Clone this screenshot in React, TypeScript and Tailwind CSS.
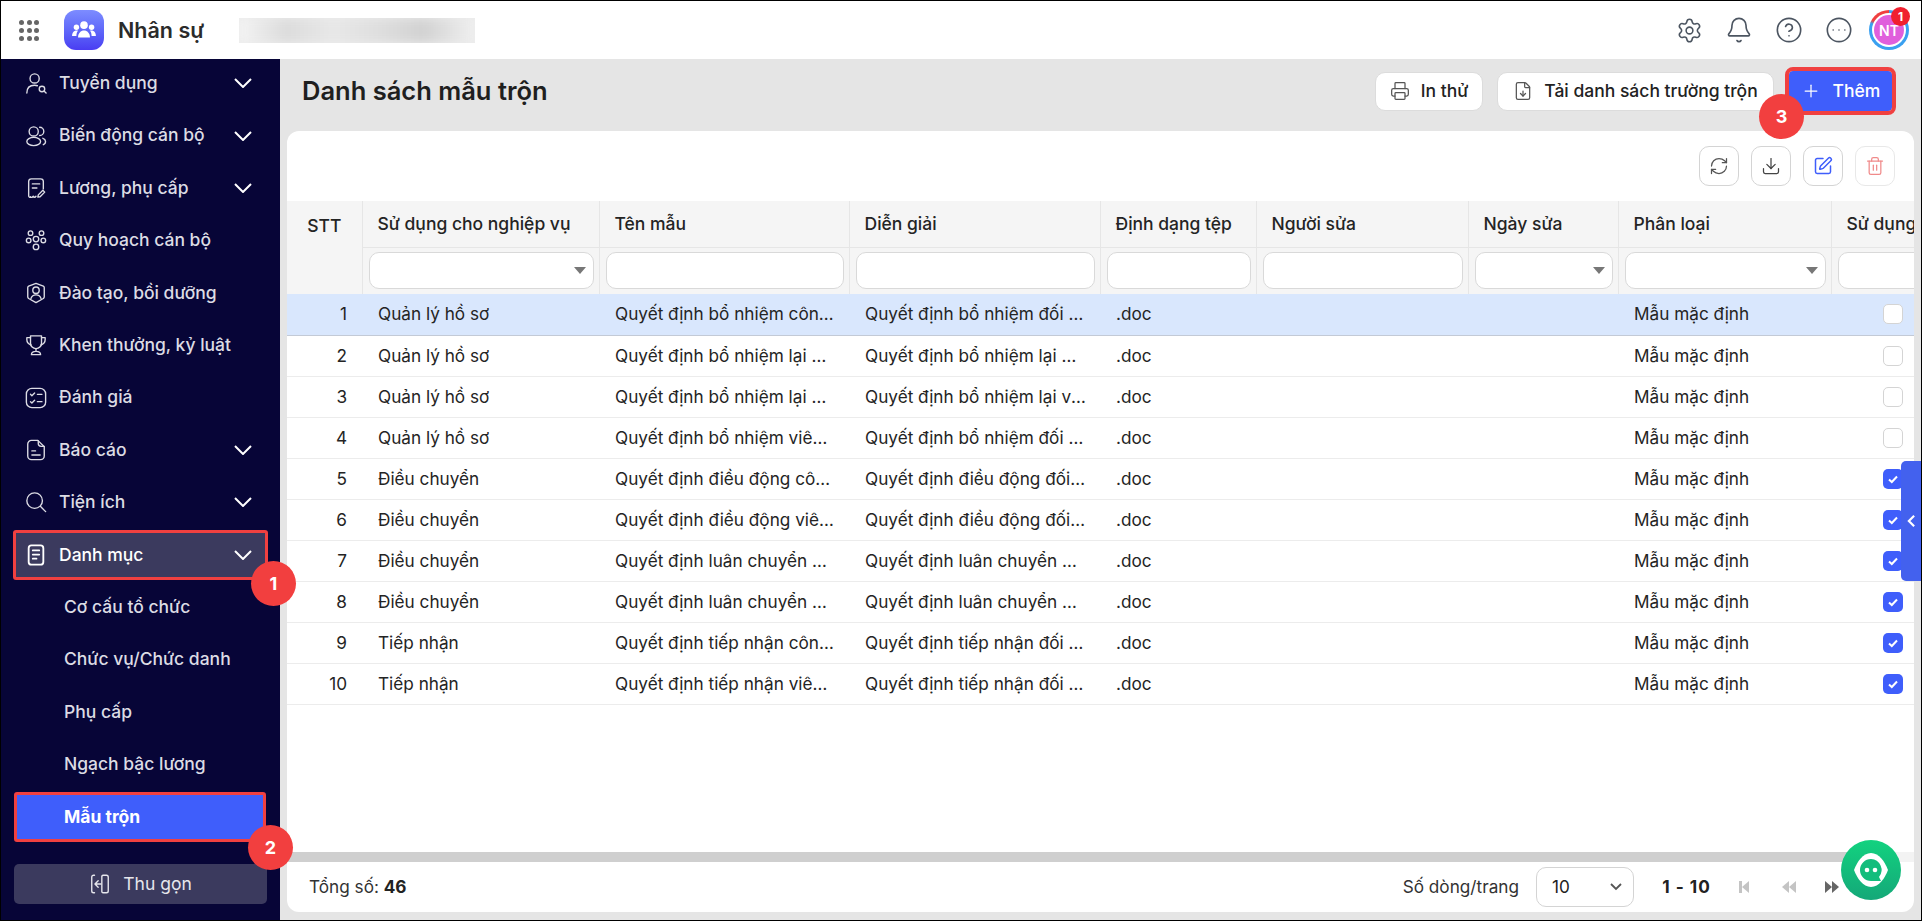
import React from "react";
import {
  Bell,
  CircleEllipsis,
  CircleHelp,
  Download,
  FileDown,
  Plus,
  Printer,
  RefreshCw,
  Settings,
  SquarePen,
  Trash2,
} from "lucide-react";

type IconProps = { className?: string };

const Ico = ({ className, children }: IconProps & { children: React.ReactNode }) => (
  <svg
    viewBox="0 0 24 24"
    fill="none"
    stroke="currentColor"
    strokeWidth={1.5}
    strokeLinecap="round"
    strokeLinejoin="round"
    className={className}
  >
    {children}
  </svg>
);

const RecruitIcon = (p: IconProps) => (
  <Ico {...p}>
    <circle cx="10.5" cy="7" r="5" />
    <path d="M2 23c0-5 3-8.5 8.5-8.5 1 0 2 .1 3 .5" />
    <circle cx="18.5" cy="18.5" r="3" />
    <path d="m21 21 2 2" />
  </Ico>
);
const ChangeIcon = (p: IconProps) => (
  <Ico {...p}>
    <circle cx="9.5" cy="7" r="5" />
    <ellipse cx="9.5" cy="18" rx="7.5" ry="4.5" />
    <path d="M16 2.5a4.5 4.5 0 0 1 0 9" />
    <path d="M19.5 14.5c3.5 1 4 5.5.5 7" />
  </Ico>
);
const SalaryIcon = (p: IconProps) => (
  <Ico {...p}>
    <path d="M12 21c-1 1.5-2 1.5-3 0-1 1.5-2.500 1.500-3 .5-.5 1-2 .5-2-1V5a3 3 0 0 1 3-3h10a3 3 0 0 1 3 3v8" />
    <path d="M8 7.500h8M8 12h5" />
    <path d="m14 22 .5-2.500 5-5 2 2-5 5z" />
  </Ico>
);
const PlanIcon = (p: IconProps) => (
  <Ico {...p}>
    <circle cx="6" cy="4.500" r="2.500" />
    <circle cx="18" cy="4.500" r="2.500" />
    <circle cx="4" cy="12.500" r="2.500" />
    <circle cx="20" cy="12.500" r="2.500" />
    <circle cx="12" cy="11" r="3" />
    <circle cx="12" cy="19.500" r="3" />
  </Ico>
);
const TrainingIcon = (p: IconProps) => (
  <Ico {...p}>
    <path d="M12 1.500 20 4.500a2 2 0 0 1 1 1.500v10c0 1-.5 1.500-1 2l-8 4.500L4 18c-.5-.5-1-1-1-2V6a2 2 0 0 1 1-1.500z" />
    <circle cx="12" cy="9" r="3.500" />
    <path d="M6.500 18c1-3 3-4 5.500-4s4.500 1 5.500 4" />
  </Ico>
);
const TrophyIcon = (p: IconProps) => (
  <Ico {...p}>
    <path d="M6 2h12v8a6 6 0 0 1-12 0z" />
    <path d="M6 4H2v2c0 3 2 5 4.500 6M18 4h4v2c0 3-2 5-4.500 6" />
    <path d="M12 16v3M7 22.500c0-2.500 2-3.500 5-3.500s5 1 5 3.500z" />
  </Ico>
);
const ReviewIcon = (p: IconProps) => (
  <Ico {...p}>
    <rect x="1.500" y="1.500" width="21" height="21" rx="6" />
    <path d="m6 8 1.500 1.500L10.500 6.500M13.500 8h5M6 16l1.500 1.500 3-3M13.500 16h5" />
  </Ico>
);
const ReportIcon = (p: IconProps) => (
  <Ico {...p}>
    <path d="M14 1.500H7a4 4 0 0 0-4 4v13a4 4 0 0 0 4 4h10a4 4 0 0 0 4-4V8.500z" />
    <path d="M14.500 2v3a3 3 0 0 0 3 3H21" />
    <path d="M7.500 13h4M7.500 17.500h9" />
  </Ico>
);
const SearchIcon = (p: IconProps) => (
  <Ico {...p}>
    <circle cx="10.500" cy="10.500" r="8.500" />
    <path d="m17 17 5.500 5.500" />
  </Ico>
);
const CatalogIcon = (p: IconProps) => (
  <Ico {...p}>
    <rect x="4" y="1.500" width="16" height="21" rx="3" strokeWidth={2} />
    <path d="M8.500 7h7M8.500 11.500h7M8.500 16h4" strokeWidth={2} />
  </Ico>
);
const CollapseIcon = (p: IconProps) => (
  <Ico {...p}>
    <path d="M6 2.500H5a2 2 0 0 0-2 2v15a2 2 0 0 0 2 2h1" />
    <path d="M14 3.500a2 2 0 0 1 2-1h3a2 2 0 0 1 2 2v15a2 2 0 0 1-2 2h-3a2 2 0 0 1-2-1z" />
    <path d="M13 12H7M10 8.500 6.500 12l3.500 3.500" />
  </Ico>
);
const ChevronIcon = () => (
  <svg viewBox="0 0 18 10" fill="none" stroke="currentColor" strokeWidth={2} className="w-[18px] h-[10px] text-white shrink-0">
    <path d="m1 1 8 8 8-8" />
  </svg>
);

const Arrow = () => (
  <span className="block w-0 h-0 border-l-[6px] border-r-[6px] border-t-[7px] border-l-transparent border-r-transparent border-t-[#777]" />
);

const Marker = ({ n, className }: { n: number; className: string }) => (
  <span
    className={
      "absolute z-20 flex items-center justify-center w-[45px] h-[45px] rounded-full bg-[#f23f3f] text-white text-[18px] font-bold " +
      className
    }
  >
    {n}
  </span>
);

const navItems = [
  { label: "Tuyển dụng", icon: RecruitIcon, caret: true },
  { label: "Biến động cán bộ", icon: ChangeIcon, caret: true },
  { label: "Lương, phụ cấp", icon: SalaryIcon, caret: true },
  { label: "Quy hoạch cán bộ", icon: PlanIcon },
  { label: "Đào tạo, bồi dưỡng", icon: TrainingIcon },
  { label: "Khen thưởng, kỷ luật", icon: TrophyIcon },
  { label: "Đánh giá", icon: ReviewIcon },
  { label: "Báo cáo", icon: ReportIcon, caret: true },
  { label: "Tiện ích", icon: SearchIcon, caret: true },
];

const subItems = ["Cơ cấu tổ chức", "Chức vụ/Chức danh", "Phụ cấp", "Ngạch bậc lương"];

const rows = [
  ["Quản lý hồ sơ", "Quyết định bổ nhiệm công chức", "Quyết định bổ nhiệm đối tượng công chức", false],
  ["Quản lý hồ sơ", "Quyết định bổ nhiệm lại công chức", "Quyết định bổ nhiệm lại công chức", false],
  ["Quản lý hồ sơ", "Quyết định bổ nhiệm lại viên chức", "Quyết định bổ nhiệm lại viên chức", false],
  ["Quản lý hồ sơ", "Quyết định bổ nhiệm viên chức", "Quyết định bổ nhiệm đối tượng viên chức", false],
  ["Điều chuyển", "Quyết định điều động công chức", "Quyết định điều động đối tượng công chức", true],
  ["Điều chuyển", "Quyết định điều động viên chức", "Quyết định điều động đối tượng viên chức", true],
  ["Điều chuyển", "Quyết định luân chuyển công chức", "Quyết định luân chuyển công chức", true],
  ["Điều chuyển", "Quyết định luân chuyển viên chức", "Quyết định luân chuyển viên chức", true],
  ["Tiếp nhận", "Quyết định tiếp nhận công chức", "Quyết định tiếp nhận đối tượng công chức", true],
  ["Tiếp nhận", "Quyết định tiếp nhận viên chức", "Quyết định tiếp nhận đối tượng viên chức", true],
] as const;

const columns = [
  { label: "Sử dụng cho nghiệp vụ", select: true },
  { label: "Tên mẫu" },
  { label: "Diễn giải" },
  { label: "Định dạng tệp" },
  { label: "Người sửa" },
  { label: "Ngày sửa", select: true },
  { label: "Phân loại", select: true },
  { label: "Sử dụng" },
];

const Sidebar = () => (
  <aside className="relative z-10 w-[279px] shrink-0 bg-[#070537] flex flex-col text-[#dcdce4] text-[17.5px] font-medium">
    <nav className="flex-1">
      <div className="-mt-[2px]">
        {navItems.map((item) => (
          <div key={item.label} className="h-[52.4px] flex items-center pl-[24px] pr-[28px] gap-[12px]">
            <item.icon className="w-[22px] h-[22px] shrink-0" />
            <span className="flex-1">{item.label}</span>
            {item.caret && <ChevronIcon />}
          </div>
        ))}
        <div className="h-[52.4px] flex items-center">
          <div className="relative ml-[12px] w-[255px] h-[50px] flex items-center gap-[12px] pl-[9px] pr-[13px] bg-[#3b3a5e] border-[3px] border-[#f04040] rounded-[3px] text-white">
            <CatalogIcon className="w-[22px] h-[22px] shrink-0" />
            <span className="flex-1">Danh mục</span>
            <ChevronIcon />
            <Marker n={1} className="-right-[31px] top-[28px]" />
          </div>
        </div>
        {subItems.map((label) => (
          <div key={label} className="h-[52.4px] flex items-center pl-[63px]">
            {label}
          </div>
        ))}
        <div className="h-[52.4px] flex items-center">
          <div className="relative ml-[13px] w-[252px] h-[50px] flex items-center pl-[47px] bg-[#3f5efb] border-[3px] border-[#f04040] rounded-[3px] text-white font-bold">
            Mẫu trộn
            <Marker n={2} className="-right-[30px] top-[30px]" />
          </div>
        </div>
      </div>
    </nav>
    <div className="px-[13px] pt-[6px] pb-[16px]">
      <div className="h-[40px] w-[253px] rounded-[5px] bg-[#3b3a5e] flex items-center justify-center gap-[12px] font-normal text-[#e6e6ec]">
        <CollapseIcon className="w-[22px] h-[22px]" />
        Thu gọn
      </div>
    </div>
  </aside>
);

const TopIcon = ({ children }: { children: React.ReactNode }) => (
  <div className="w-[50px] flex justify-center">{children}</div>
);

const TopBar = () => (
  <header className="h-[58px] shrink-0 bg-white flex items-center">
    <div className="ml-[18px] grid grid-cols-3 gap-[3px] w-[20px]">
      {Array.from({ length: 9 }).map((_, i) => (
        <span key={i} className="w-[5px] h-[5px] rounded-full bg-[#666]" />
      ))}
    </div>
    <div className="ml-[25px] w-[40px] h-[40px] rounded-[12px] bg-gradient-to-b from-[#7d8cff] to-[#4a3cf2] flex items-center justify-center">
      <svg viewBox="0 0 24 24" fill="#fff" className="w-[26px] h-[26px]">
        <circle cx="12" cy="7.500" r="3.500" />
        <circle cx="5" cy="9.500" r="2.500" />
        <circle cx="19" cy="9.500" r="2.500" />
        <path d="M6.500 19c0-4 2.500-6.500 5.500-6.500s5.500 2.500 5.500 6.500z" />
        <path d="M1 17.500c0-3 1.800-5 4-5 .6 0 1.100.1 1.500.3C5.400 14 5 15.800 5 17.500zM23 17.500c0-3-1.800-5-4-5-.6 0-1.100.1-1.500.3 1.100 1.200 1.500 3 1.500 4.700z" />
      </svg>
    </div>
    <span className="ml-[14px] text-[21.500px] font-semibold text-[#2b2b2b]">Nhân sự</span>
    <div className="ml-[35px] w-[236px] h-[25px] overflow-hidden bg-[#ececec] flex items-center">
      <div className="w-full h-[25px] blur-[5px] bg-[linear-gradient(90deg,#f4f4f4_0%,#dcdcdc_20%,#e8e8e8_40%,#dedede_60%,#d2d2d2_78%,#f0f0f0_100%)]" />
    </div>
    <div className="ml-auto flex items-center pr-[12px] text-[#4c5561]">
      <TopIcon>
        <Settings className="w-[27px] h-[27px]" strokeWidth={1.4} />
      </TopIcon>
      <TopIcon>
        <Bell className="w-[28px] h-[28px]" strokeWidth={1.4} />
      </TopIcon>
      <TopIcon>
        <CircleHelp className="w-[28px] h-[28px]" strokeWidth={1.4} />
      </TopIcon>
      <TopIcon>
        <CircleEllipsis className="w-[28px] h-[28px]" strokeWidth={1.4} />
      </TopIcon>
      <div className="relative ml-[5px] w-[40px] h-[40px] rounded-full p-[3px] bg-[conic-gradient(#3aa0f0_0deg,#3aa0f0_290deg,#f04040_300deg,#f04040_360deg)]">
        <div className="w-full h-full rounded-full bg-white p-[2px]">
          <div className="w-full h-full rounded-full bg-[#e05fdc] text-white text-[14px] font-semibold flex items-center justify-center">
            NT
          </div>
        </div>
        <span className="absolute -top-[3px] -right-[1px] w-[19px] h-[19px] rounded-full bg-[#f0202f] text-white text-[12px] font-bold flex items-center justify-center">
          1
        </span>
      </div>
    </div>
  </header>
);

const HeadButton = ({ children, width }: { children: React.ReactNode; width: string }) => (
  <button
    className={
      "h-[39px] flex items-center justify-center gap-[11px] rounded-[10px] border border-[#dcdcdc] bg-white text-[17.500px] font-medium text-[#222] " +
      width
    }
  >
    {children}
  </button>
);

const ToolButton = ({ children, dim }: { children: React.ReactNode; dim?: boolean }) => (
  <button
    className={
      "w-[40px] h-[40px] rounded-[10px] border flex items-center justify-center bg-white " +
      (dim ? "border-[#e8e8e8]" : "border-[#d4d4d4]")
    }
  >
    {children}
  </button>
);

const FilterBox = ({ select }: { select?: boolean }) => (
  <div className="h-[37px] rounded-[10px] border border-[#d9d9d9] bg-white flex items-center justify-end pr-[7px]">
    {select && <Arrow />}
  </div>
);

const PagerIcon = ({ color, bar, flip }: { color: string; bar?: boolean; flip?: boolean }) => (
  <svg viewBox="0 0 14 14" className={"w-[14px] h-[14px] " + (flip ? "" : "rotate-180")} fill={color}>
    {bar ? (
      <>
        <path d="M10 1v12L3 7z" />
        <path d="M0 1h3v12H0z" />
      </>
    ) : (
      <>
        <path d="M0 1l7 6-7 6z" />
        <path d="M7 1l7 6-7 6z" />
      </>
    )}
  </svg>
);

const DataTable = () => (
  <table className="table-fixed border-collapse w-[1668px] text-[17.500px] text-[#242424]">
    <colgroup>
      <col className="w-[75px]" />
      <col className="w-[237px]" />
      <col className="w-[250px]" />
      <col className="w-[251px]" />
      <col className="w-[156px]" />
      <col className="w-[212px]" />
      <col className="w-[150px]" />
      <col className="w-[213px]" />
      <col className="w-[124px]" />
    </colgroup>
    <thead className="bg-[#f5f5f5]">
      <tr className="h-[46px]">
        <th rowSpan={2} className="align-top pt-[12px] font-medium text-center">
          STT
        </th>
        {columns.map((c) => (
          <th key={c.label} className="border-l border-b border-[#e6e6e6] pl-[15px] text-left font-medium whitespace-nowrap overflow-hidden">
            {c.label}
          </th>
        ))}
      </tr>
      <tr className="h-[47px]">
        {columns.map((c) => (
          <th key={c.label} className="border-l border-[#e6e6e6] pl-[6px] pr-[5px] font-normal">
            <FilterBox select={c.select} />
          </th>
        ))}
      </tr>
    </thead>
    <tbody className="text-[17.200px]">
      {rows.map((r, i) => {
        const selected = i === 0;
        return (
          <tr
            key={i}
            className={"h-[41px] border-b " + (selected ? "bg-[#d9e7fd] border-[#c3cad6]" : "border-[#ececec]")}
          >
            <td className="text-right pr-[15px]">{i + 1}</td>
            <td className="pl-[16px]">{r[0]}</td>
            <td className="pl-[16px] pr-[14px] truncate">{r[1]}</td>
            <td className="pl-[16px] pr-[14px] truncate">{r[2]}</td>
            <td className="pl-[16px]">.doc</td>
            <td />
            <td />
            <td className="pl-[16px]">Mẫu mặc định</td>
            <td>
              <div className="flex justify-center">
                {r[3] ? (
                  <span className="w-[20px] h-[20px] rounded-[5px] bg-[#3f5efb] flex items-center justify-center">
                    <svg viewBox="0 0 12 12" fill="none" stroke="#fff" strokeWidth={2} className="w-[12px] h-[12px]">
                      <path d="m2 6.500 2.800 2.500L10 3.500" />
                    </svg>
                  </span>
                ) : (
                  <span className="w-[20px] h-[20px] rounded-[5px] border border-[#d4d4d4] bg-white" />
                )}
              </div>
            </td>
          </tr>
        );
      })}
    </tbody>
  </table>
);

export default function App() {
  return (
    <div className="relative w-screen h-screen overflow-hidden border border-black flex flex-col bg-[#e5e5e5] font-['Inter',sans-serif]">
      <TopBar />
      <div className="flex-1 min-h-0 flex">
        <Sidebar />
        <main className="flex-1 min-w-0 flex flex-col pl-[7px] pr-[7px] pb-[8px]">
          <div className="h-[72px] shrink-0 flex items-center pl-[15px] pr-[22px] pb-[8px]">
            <h1 className="text-[25.500px] font-semibold text-[#1f1f1f]">Danh sách mẫu trộn</h1>
            <div className="ml-auto flex items-center">
              <HeadButton width="w-[108px]">
                <Printer className="w-[20px] h-[20px] text-[#555]" strokeWidth={1.5} />
                In thử
              </HeadButton>
              <div className="w-[14px]" />
              <HeadButton width="w-[277px]">
                <FileDown className="w-[20px] h-[20px] text-[#555]" strokeWidth={1.5} />
                Tải danh sách trường trộn
              </HeadButton>
              <div className="w-[15px]" />
              <div className="relative">
                <button className="w-[103px] h-[40px] rounded-[4px] bg-[#3f5efb] outline-[4px] outline-[#f04040] text-white text-[17.500px] font-medium flex items-center justify-center gap-[12px]">
                  <Plus className="w-[20px] h-[20px]" strokeWidth={1.5} />
                  Thêm
                </button>
                <Marker n={3} className="-left-[30px] top-[23px]" />
              </div>
            </div>
          </div>
          <section className="flex-1 min-h-0 rounded-[12px] bg-white overflow-hidden flex flex-col">
            <div className="h-[70px] shrink-0 flex items-start justify-end gap-[12px] pt-[15px] pr-[19px]">
              <ToolButton>
                <RefreshCw className="w-[20px] h-[20px] text-[#555]" strokeWidth={1.5} />
              </ToolButton>
              <ToolButton>
                <Download className="w-[20px] h-[20px] text-[#444]" strokeWidth={1.5} />
              </ToolButton>
              <ToolButton>
                <SquarePen className="w-[20px] h-[20px] text-[#3f5efb]" strokeWidth={1.8} />
              </ToolButton>
              <ToolButton dim>
                <Trash2 className="w-[20px] h-[20px] text-[#f08a8a]" strokeWidth={1.5} />
              </ToolButton>
            </div>
            <div className="flex-1 min-h-0 overflow-hidden">
              <DataTable />
            </div>
            <div className="h-[10px] shrink-0 bg-[#f3f3f3]">
              <div className="h-full w-[1590px] bg-[#cfcfcf]" />
            </div>
            <footer className="h-[50px] shrink-0 flex items-center pl-[22px] text-[17.200px] text-[#333]">
              <span>
                Tổng số: <b className="font-bold text-[#222]">46</b>
              </span>
              <div className="ml-auto flex items-center pr-[75px]">
                <span>Số dòng/trang</span>
                <div className="ml-[17px] w-[98px] h-[40px] rounded-[10px] border border-[#d4d4d4] flex items-center justify-between pl-[15px] pr-[11px] text-[#222]">
                  10
                  <svg viewBox="0 0 12 8" fill="none" stroke="#555" strokeWidth={1.800} className="w-[12px] h-[8px]">
                    <path d="m1 1 5 5 5-5" />
                  </svg>
                </div>
                <b className="ml-[26px] w-[53px] text-center font-bold text-[#222] tracking-[1px] whitespace-nowrap">1 - 10</b>
                <div className="ml-[26px] flex items-center gap-[29px]">
                  <PagerIcon color="#c4c4c4" bar flip />
                  <PagerIcon color="#c4c4c4" />
                  <PagerIcon color="#666" flip />
                </div>
              </div>
            </footer>
          </section>
        </main>
      </div>

      {/* side handle and chat bubble float above the page */}
      <div className="absolute z-10 right-0 top-[460px] w-[20px] h-[120px] rounded-l-[5px] bg-[#4361ee] flex items-center justify-center">
        <svg viewBox="0 0 10 16" fill="none" stroke="#fff" strokeWidth={2.500} className="w-[9px] h-[14px]">
          <path d="M8 2 2 8l6 6" />
        </svg>
      </div>
      <div className="absolute z-10 right-[20px] top-[839px] w-[60px] h-[60px] rounded-full bg-gradient-to-b from-[#12d27f] to-[#14a878] flex items-center justify-center">
        <svg viewBox="0 0 40 40" className="w-[40px] h-[40px]">
          <path d="M20 3c8 0 14 9 17 17-3 8-9 17-17 17S6 28 3 20C6 12 12 3 20 3z" fill="#fff" />
          <path d="M20 9a11 11 0 1 0 0 22h10l-2-4a11 11 0 0 0-8-18z" fill="#13bd7c" />
          <circle cx="16" cy="20" r="2.300" fill="#fff" />
          <circle cx="24" cy="20" r="2.300" fill="#fff" />
        </svg>
      </div>
    </div>
  );
}
